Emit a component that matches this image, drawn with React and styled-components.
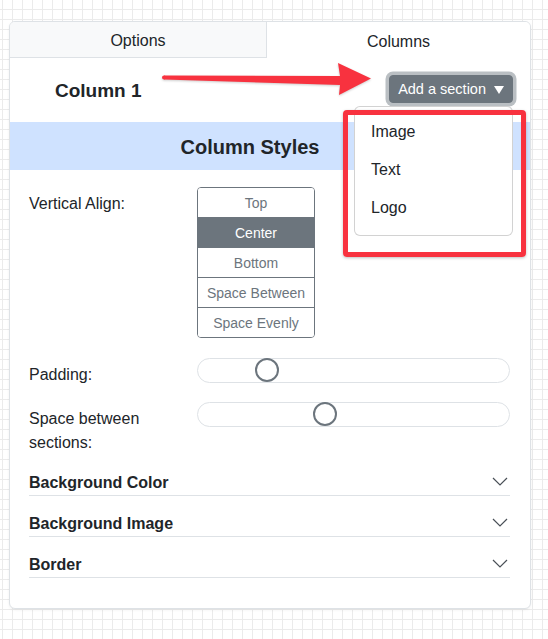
import React from "react";
import styled, { createGlobalStyle } from "styled-components";

const GlobalStyle = createGlobalStyle`
  html, body {
    margin: 0;
  }
  body {
    min-height: 639px;
    font-family: "Liberation Sans", Arial, sans-serif;
    color: #212529;
    background-color: #fff;
    background-image: linear-gradient(to right, #ebebeb 1px, transparent 1px),
      linear-gradient(to bottom, #ebebeb 1px, transparent 1px);
    background-size: 10px 10px;
    background-position: 2px 9px;
  }
`;

const Page = styled.div`
  padding: 21px 17px 0 9px;
`;

const Panel = styled.div`
  width: 520px;
  background: #fff;
  border: 1px solid #dee2e6;
  border-radius: 6px;
  box-shadow: 0 1px 3px rgba(0, 0, 0, 0.06);
`;

const Tabs = styled.div`
  display: grid;
  grid-template-columns: 257px 1fr;
`;

const Tab = styled.div`
  height: ${(p) => (p.$active ? "37px" : "36px")};
  display: flex;
  align-items: center;
  justify-content: center;
  padding-top: 2px;
  box-sizing: border-box;
  font-size: 16px;
  color: #212529;
  background: ${(p) => (p.$active ? "#fff" : "#f8f9fa")};
  border-bottom: ${(p) => (p.$active ? "none" : "1px solid #dee2e6")};
  border-right: ${(p) => (p.$active ? "none" : "1px solid #dee2e6")};
  border-radius: ${(p) => (p.$active ? "0 5px 0 0" : "5px 0 0 0")};
`;

const Header = styled.div`
  position: relative;
  height: 63px;
  display: flex;
  align-items: center;
  justify-content: space-between;
  padding: 0 17px 0 45px;
`;

const ColumnTitle = styled.h5`
  margin: 0;
  font-size: 19px;
  font-weight: 700;
`;

const Arrow = styled.svg`
  position: absolute;
  left: 150px;
  top: 1px;
  filter: drop-shadow(0 1px 1px rgba(0, 0, 0, 0.2));
  pointer-events: none;
`;

const Dropdown = styled.div`
  position: relative;
  margin-top: -3px;
`;

const DropButton = styled.button`
  height: 28px;
  display: flex;
  align-items: center;
  gap: 8px;
  padding: 0 8px;
  font-family: inherit;
  font-size: 14.5px;
  color: #fff;
  background: #6c757d;
  border: 1px solid #6c757d;
  border-radius: 4px;
  box-shadow: 0 0 0 3.5px rgba(130, 138, 145, 0.55);
`;

const Caret = styled.span`
  width: 0;
  height: 0;
  border-left: 5px solid transparent;
  border-right: 5px solid transparent;
  border-top: 8px solid #fff;
  margin-top: 1px;
`;

const Menu = styled.div`
  position: absolute;
  top: calc(100% + 3px);
  right: 0;
  width: 157px;
  padding: 6px 0 8px;
  background: #fff;
  border: 1px solid rgba(0, 0, 0, 0.175);
  border-radius: 6px;
  z-index: 2;
`;

const MenuItem = styled.div`
  padding: 7px 16px;
  font-size: 16px;
  line-height: 24px;
  color: #212529;
`;

const Highlight = styled.div`
  position: absolute;
  left: -46px;
  top: 35px;
  width: 173px;
  height: 137px;
  border: 5px solid #f8323f;
  border-radius: 4px;
  box-shadow: 0 1px 3px rgba(0, 0, 0, 0.25);
  z-index: 3;
  pointer-events: none;
`;

const Band = styled.div`
  height: 48px;
  display: flex;
  align-items: center;
  justify-content: center;
  padding: 2px 40px 0 0;
  box-sizing: border-box;
  background: #cfe2ff;
  font-size: 20px;
  font-weight: 700;
`;

const Body = styled.div`
  padding: 17px 20px 30px 19px;
`;

const FieldRow = styled.div`
  display: grid;
  grid-template-columns: 168px 1fr;
  align-items: start;
  margin-top: ${(p) => p.$gap || 0}px;
`;

const Label = styled.div`
  padding-top: 5px;
  font-size: 16px;
  line-height: 24px;
`;

const AlignGroup = styled.div`
  width: 116px;
  display: flex;
  flex-direction: column;
  border: 1px solid #6c757d;
  border-radius: 4px;
  overflow: hidden;
`;

const AlignOption = styled.div`
  height: 29px;
  display: flex;
  align-items: center;
  justify-content: center;
  font-size: 14px;
  color: ${(p) => (p.$active ? "#fff" : "#6c757d")};
  background: ${(p) => (p.$active ? "#6c757d" : "#fff")};
  & + & {
    border-top: 1px solid #6c757d;
  }
`;

const Track = styled.div`
  position: relative;
  height: 23px;
  border: 1px solid #dee2e6;
  border-radius: 13px;
  background: #fff;
`;

const Thumb = styled.div`
  position: absolute;
  top: -1px;
  width: 20px;
  height: 20px;
  border: 2px solid #6c757d;
  border-radius: 50%;
  background: #fff;
`;

const Section = styled.div`
  display: flex;
  align-items: center;
  justify-content: space-between;
  margin-top: 16px;
  height: 24px;
  border-bottom: 1px solid #dee2e6;
  font-size: 16px;
  font-weight: 700;
`;

const Chevron = styled.svg`
  margin-right: 2px;
  margin-top: -3px;
`;

const alignOptions = ["Top", "Center", "Bottom", "Space Between", "Space Evenly"];
const sections = ["Background Color", "Background Image", "Border"];

const Slider = ({ value }) => (
  <Track>
    <Thumb style={{ left: `calc((100% - 24px) * ${value / 100})` }} />
  </Track>
);

const App = () => {
  return (
    <Page>
      <GlobalStyle />
      <Panel>
        <Tabs>
          <Tab>Options</Tab>
          <Tab $active>Columns</Tab>
        </Tabs>

        <Header>
          <ColumnTitle>Column 1</ColumnTitle>
          <Arrow width="220" height="40" viewBox="160 60 220 40">
            <circle cx="164" cy="77.5" r="2" fill="#f8323f" />
            <polygon
              points="164,75.5 340,76 338,63 371,78.5 339,95 340,85 164,79.5"
              fill="#f8323f"
            />
          </Arrow>
          <Dropdown>
            <DropButton>
              Add a section
              <Caret />
            </DropButton>
            <Menu>
              <MenuItem>Image</MenuItem>
              <MenuItem>Text</MenuItem>
              <MenuItem>Logo</MenuItem>
            </Menu>
            <Highlight />
          </Dropdown>
        </Header>

        <Band>Column Styles</Band>

        <Body>
          <FieldRow>
            <Label>Vertical Align:</Label>
            <AlignGroup>
              {alignOptions.map((opt) => (
                <AlignOption key={opt} $active={opt === "Center"}>
                  {opt}
                </AlignOption>
              ))}
            </AlignGroup>
          </FieldRow>

          <FieldRow $gap={20}>
            <Label>Padding:</Label>
            <Slider value={20} />
          </FieldRow>

          <FieldRow $gap={15}>
            <Label>
              Space between
              <br />
              sections:
            </Label>
            <Slider value={40} />
          </FieldRow>

          {sections.map((title) => (
            <Section key={title}>
              {title}
              <Chevron width="16" height="9" viewBox="0 0 16 9">
                <polyline
                  points="1,1 8,8 15,1"
                  fill="none"
                  stroke="#495057"
                  strokeWidth="1.2"
                />
              </Chevron>
            </Section>
          ))}
        </Body>
      </Panel>
    </Page>
  );
};

export default App;
